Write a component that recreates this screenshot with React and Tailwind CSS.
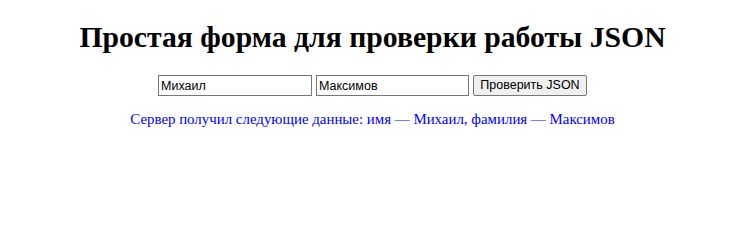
export default function App() {
  return (
    <div className="w-[750px] h-[229px] bg-white">
      <div className="w-[745px] flex flex-col items-center">
        <h1 className="mt-[20px] mb-0 text-[29.7px] leading-[35px] font-bold text-black font-['Liberation_Serif',serif]">
          Простая форма для проверки работы JSON
        </h1>
        <div className="mt-[20px] flex gap-[4px] items-center">
          <input
            readOnly
            value="Михаил"
            className="w-[154px] h-[21px] border border-[#767676] px-[2px] text-[12.5px] text-black font-['Liberation_Sans',sans-serif] outline-none"
          />
          <input
            readOnly
            value="Максимов"
            className="w-[153px] h-[21px] border border-[#767676] px-[2px] text-[12.5px] text-black font-['Liberation_Sans',sans-serif] outline-none"
          />
          <button className="w-[114px] h-[21px] border border-[#767676] rounded-[2px] bg-[#efefef] text-[12.5px] text-black font-['Liberation_Sans',sans-serif] leading-none">
            Проверить JSON
          </button>
        </div>
        <p className="mt-[15px] text-[14.9px] leading-[17px] text-[#0000ff] font-['Liberation_Serif',serif]">
          Сервер получил следующие данные: имя — Михаил, фамилия — Максимов
        </p>
      </div>
    </div>
  );
}
